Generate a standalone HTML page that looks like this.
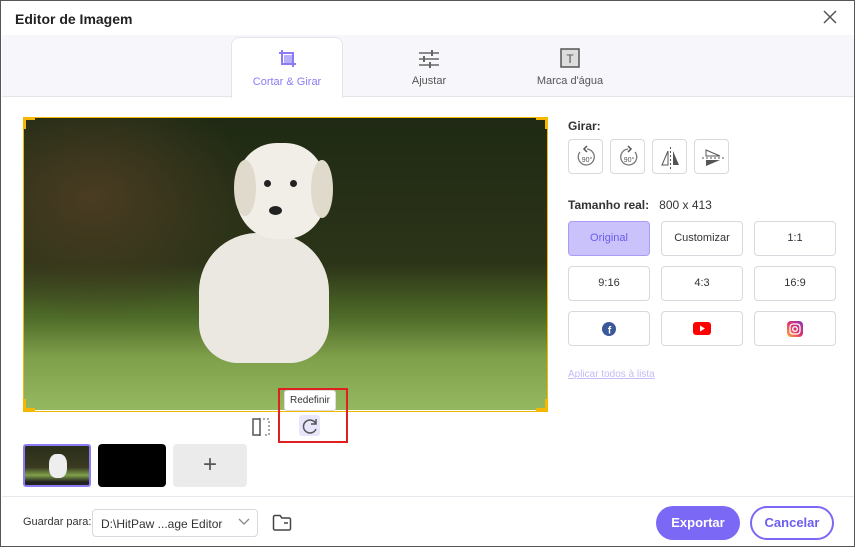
<!DOCTYPE html>
<html><head><meta charset="utf-8"><style>
*{box-sizing:border-box;margin:0;padding:0}
body{width:855px;height:547px;overflow:hidden;font-family:"Liberation Sans",sans-serif;background:#fff;position:relative}
.win{position:absolute;left:0;top:0;width:855px;height:547px;border:1px solid #555;background:#fff}
.abs{position:absolute}
.title{left:14px;top:10px;font-size:14px;font-weight:bold;color:#222}
.tabbar{left:1px;top:34px;width:852px;height:62px;background:#f7f7fb;border-bottom:1px solid #e4e4ea}
.tab{position:absolute;top:36px;height:61px;width:112px;text-align:center;font-size:11px;color:#555}
.tab.act{background:#fff;border:1px solid #e4e4ea;border-bottom:none;border-radius:8px 8px 0 0;color:#8a7cf5}
.tab span{position:absolute;left:0;right:0;top:38px}
.btn{position:absolute;border:1px solid #d8d8de;border-radius:4px;background:#fff;font-size:11px;color:#333;text-align:center;width:82px;height:35px;line-height:33px}
.ib{position:absolute;top:138px;width:35px;height:35px;border:1px solid #d8d8de;border-radius:4px}
.c{position:absolute;width:12px;height:12px;border-color:#f5b800;border-style:solid}
</style></head><body><div class="win">
<div class="abs title">Editor de Imagem</div>
<svg class="abs" style="left:822px;top:9px" width="14" height="14"><path d="M1 1L13 13M13 1L1 13" stroke="#555" stroke-width="1.5"/></svg>
<div class="abs tabbar"></div>
<div class="tab act" style="left:230px"><svg class="abs" style="left:45px;top:10px" width="22" height="22"><path d="M5 2v14h14M2 5h14v14" fill="none" stroke="#8a7cf5" stroke-width="2"/><rect x="7" y="7" width="8" height="8" fill="#b8aefa"/></svg><span>Cortar &amp; Girar</span></div>
<div class="tab" style="left:372px;border:none;background:none"><svg class="abs" style="left:45px;top:12px" width="22" height="20"><path d="M1 4h20M1 10h20M1 16h20" stroke="#666" stroke-width="1.5"/><path d="M14 1v6M6 7v6M12 13v6" stroke="#666" stroke-width="2"/></svg><span>Ajustar</span></div>
<div class="tab" style="left:513px;border:none;background:none"><svg class="abs" style="left:45px;top:10px" width="22" height="22"><rect x="2" y="2" width="18" height="18" fill="#ddd" stroke="#555" stroke-width="1.5"/><text x="11" y="16" font-size="12" text-anchor="middle" fill="#555" font-family="Liberation Sans">T</text></svg><span>Marca d'água</span></div>

<div class="abs" style="left:23px;top:117px;width:523px;height:292px;overflow:hidden;background:linear-gradient(180deg,#1f2a14 0%,#2c3418 50%,#4e6a28 68%,#7fa04a 82%,#94b860 100%)">
<div class="abs" style="left:0;top:0;width:230px;height:200px;background:radial-gradient(ellipse at 30% 40%,#4a3c22,transparent 70%)"></div>
<div class="abs" style="left:175px;top:115px;width:130px;height:130px;border-radius:45% 45% 30% 30%;background:#ebe8e2"></div>
<div class="abs" style="left:212px;top:25px;width:90px;height:96px;border-radius:45%;background:#f1eee8"></div>
<div class="abs" style="left:210px;top:42px;width:22px;height:56px;border-radius:50%;background:#e0dacd"></div>
<div class="abs" style="left:287px;top:42px;width:22px;height:58px;border-radius:50%;background:#e0dacd"></div>
<div class="abs" style="left:240px;top:62px;width:7px;height:7px;border-radius:50%;background:#222"></div>
<div class="abs" style="left:266px;top:62px;width:7px;height:7px;border-radius:50%;background:#222"></div>
<div class="abs" style="left:245px;top:88px;width:13px;height:9px;border-radius:50%;background:#222"></div>
</div>
<div class="c" style="left:22px;top:116px;border-width:3px 0 0 3px"></div>
<div class="c" style="left:535px;top:116px;border-width:3px 3px 0 0"></div>
<div class="c" style="left:22px;top:398px;border-width:0 0 3px 3px"></div>
<div class="c" style="left:535px;top:398px;border-width:0 3px 3px 0"></div>
<div class="abs" style="left:22px;top:116px;width:525px;height:295px;border:1px solid #f5b800"></div>

<svg class="abs" style="left:250px;top:416px" width="20" height="20"><path d="M9 2H2v16h7M9 1v18" fill="none" stroke="#555" stroke-width="1.5"/><path d="M12 2h6v16h-6" fill="none" stroke="#555" stroke-dasharray="2 2"/></svg>
<div class="abs" style="left:298px;top:414px;width:21px;height:21px;background:#e8e6fb;border-radius:3px"></div>
<svg class="abs" style="left:299px;top:415px" width="20" height="20"><path d="M16 8A6.5 6.5 0 1 0 16 13" fill="none" stroke="#555" stroke-width="1.5"/><path d="M16 3v5h-5" fill="none" stroke="#555" stroke-width="1.5"/></svg>
<div class="abs" style="left:283px;top:389px;width:52px;height:21px;background:#fff;border:1px solid #ddd;border-radius:3px;font-size:10px;color:#333;line-height:19px;text-align:center">Redefinir</div>
<div class="abs" style="left:277px;top:387px;width:70px;height:55px;border:2px solid #e02020"></div>

<div class="abs" style="left:22px;top:443px;width:68px;height:43px;border:2px solid #8a7cf5;border-radius:3px;background:linear-gradient(180deg,#2a2f1a 0%,#3a3a20 55%,#7fa04a 75%,#222 92%);overflow:hidden"><div class="abs" style="left:24px;top:8px;width:18px;height:24px;border-radius:40%;background:#eee"></div></div>
<div class="abs" style="left:97px;top:443px;width:68px;height:43px;border-radius:4px;background:#000"></div>
<div class="abs" style="left:172px;top:443px;width:74px;height:43px;border-radius:4px;background:#ebebeb;text-align:center;font-size:24px;line-height:41px;color:#555">+</div>

<div class="abs" style="left:567px;top:118px;font-size:12px;font-weight:bold;color:#333">Girar:</div>
<div class="ib" style="left:567px"><svg width="35" height="35"><path d="M11 12A8 8 0 1 0 18 9" fill="none" stroke="#777" stroke-width="1.3"/><path d="M18 6l-3 3 3 3" fill="none" stroke="#555" stroke-width="1.5"/><text x="18" y="22" font-size="7" text-anchor="middle" fill="#555" font-family="Liberation Sans">90°</text></svg></div>
<div class="ib" style="left:609px"><svg width="35" height="35"><path d="M24 12A8 8 0 1 1 17 9" fill="none" stroke="#777" stroke-width="1.3"/><path d="M17 6l3 3-3 3" fill="none" stroke="#555" stroke-width="1.5"/><text x="18" y="22" font-size="7" text-anchor="middle" fill="#555" font-family="Liberation Sans">90°</text></svg></div>
<div class="ib" style="left:651px"><svg width="35" height="35"><path d="M15 11L9 25h6z" fill="none" stroke="#555"/><path d="M20 11l6 14h-6z" fill="#555"/><path d="M17.5 7v22" stroke="#555" stroke-dasharray="2 2"/></svg></div>
<div class="ib" style="left:693px"><svg width="35" height="35"><path d="M11 10l14 6H11z" fill="none" stroke="#555"/><path d="M11 20h14l-14 6z" fill="#555"/><path d="M7 18h22" stroke="#555" stroke-dasharray="2 2"/></svg></div>

<div class="abs" style="left:567px;top:197px;font-size:12px;color:#333"><b>Tamanho real:</b>&nbsp;&nbsp; 800 x 413</div>
<div class="btn" style="left:567px;top:220px;background:#c9c2fb;border-color:#a89cf7;color:#6b5df0">Original</div>
<div class="btn" style="left:660px;top:220px">Customizar</div>
<div class="btn" style="left:753px;top:220px">1:1</div>
<div class="btn" style="left:567px;top:265px">9:16</div>
<div class="btn" style="left:660px;top:265px">4:3</div>
<div class="btn" style="left:753px;top:265px">16:9</div>
<div class="btn" style="left:567px;top:310px"><svg width="16" height="16" style="margin-top:9px"><circle cx="8" cy="8" r="7" fill="#3b5998"/><text x="8.5" y="12.5" font-size="10" font-weight="bold" text-anchor="middle" fill="#fff" font-family="Liberation Sans">f</text></svg></div>
<div class="btn" style="left:660px;top:310px"><svg width="18" height="14" style="margin-top:10px"><rect width="18" height="13" rx="3" fill="#f00"/><path d="M7 3.5v6l5-3z" fill="#fff"/></svg></div>
<div class="btn" style="left:753px;top:310px"><svg width="16" height="16" style="margin-top:9px"><defs><linearGradient id="ig" x1="0" y1="1" x2="1" y2="0"><stop offset="0" stop-color="#fdb540"/><stop offset=".5" stop-color="#e1306c"/><stop offset="1" stop-color="#833ab4"/></linearGradient></defs><rect width="16" height="16" rx="4" fill="url(#ig)"/><rect x="3" y="3" width="10" height="10" rx="3" fill="none" stroke="#fff" stroke-width="1.3"/><circle cx="8" cy="8" r="2.3" fill="none" stroke="#fff" stroke-width="1.3"/></svg></div>
<div class="abs" style="left:567px;top:368px;font-size:10px;color:#c3bcf5;text-decoration:underline">Aplicar todos à lista</div>

<div class="abs" style="left:1px;top:495px;width:852px;border-top:1px solid #e8e8ee"></div>
<div class="abs" style="left:22px;top:515px;font-size:11px;color:#333">Guardar para:</div>
<div class="abs" style="left:91px;top:508px;width:166px;height:28px;border:1px solid #d8d8de;border-radius:4px;font-size:12px;color:#333;padding:7px 8px">D:\HitPaw ...age Editor</div>
<svg class="abs" style="left:237px;top:517px" width="12" height="8"><path d="M1 1l5 5 5-5" fill="none" stroke="#888" stroke-width="1.3"/></svg>
<svg class="abs" style="left:271px;top:513px" width="20" height="17"><path d="M1.5 3a1.5 1.5 0 0 1 1.5-1.5h5l2 2.5h7a1.5 1.5 0 0 1 1.5 1.5v9a1.5 1.5 0 0 1-1.5 1.5H3A1.5 1.5 0 0 1 1.5 14.5z" fill="none" stroke="#444" stroke-width="1.5"/><path d="M12 9h4" stroke="#444" stroke-width="1.5"/></svg>
<div class="abs" style="left:655px;top:505px;width:84px;height:34px;border-radius:17px;background:#7b68f5;color:#fff;font-size:13px;font-weight:bold;text-align:center;line-height:34px">Exportar</div>
<div class="abs" style="left:749px;top:505px;width:84px;height:34px;border-radius:17px;border:2px solid #7b68f5;color:#6b5df0;font-size:13px;font-weight:bold;text-align:center;line-height:30px">Cancelar</div>
</div></body></html>
